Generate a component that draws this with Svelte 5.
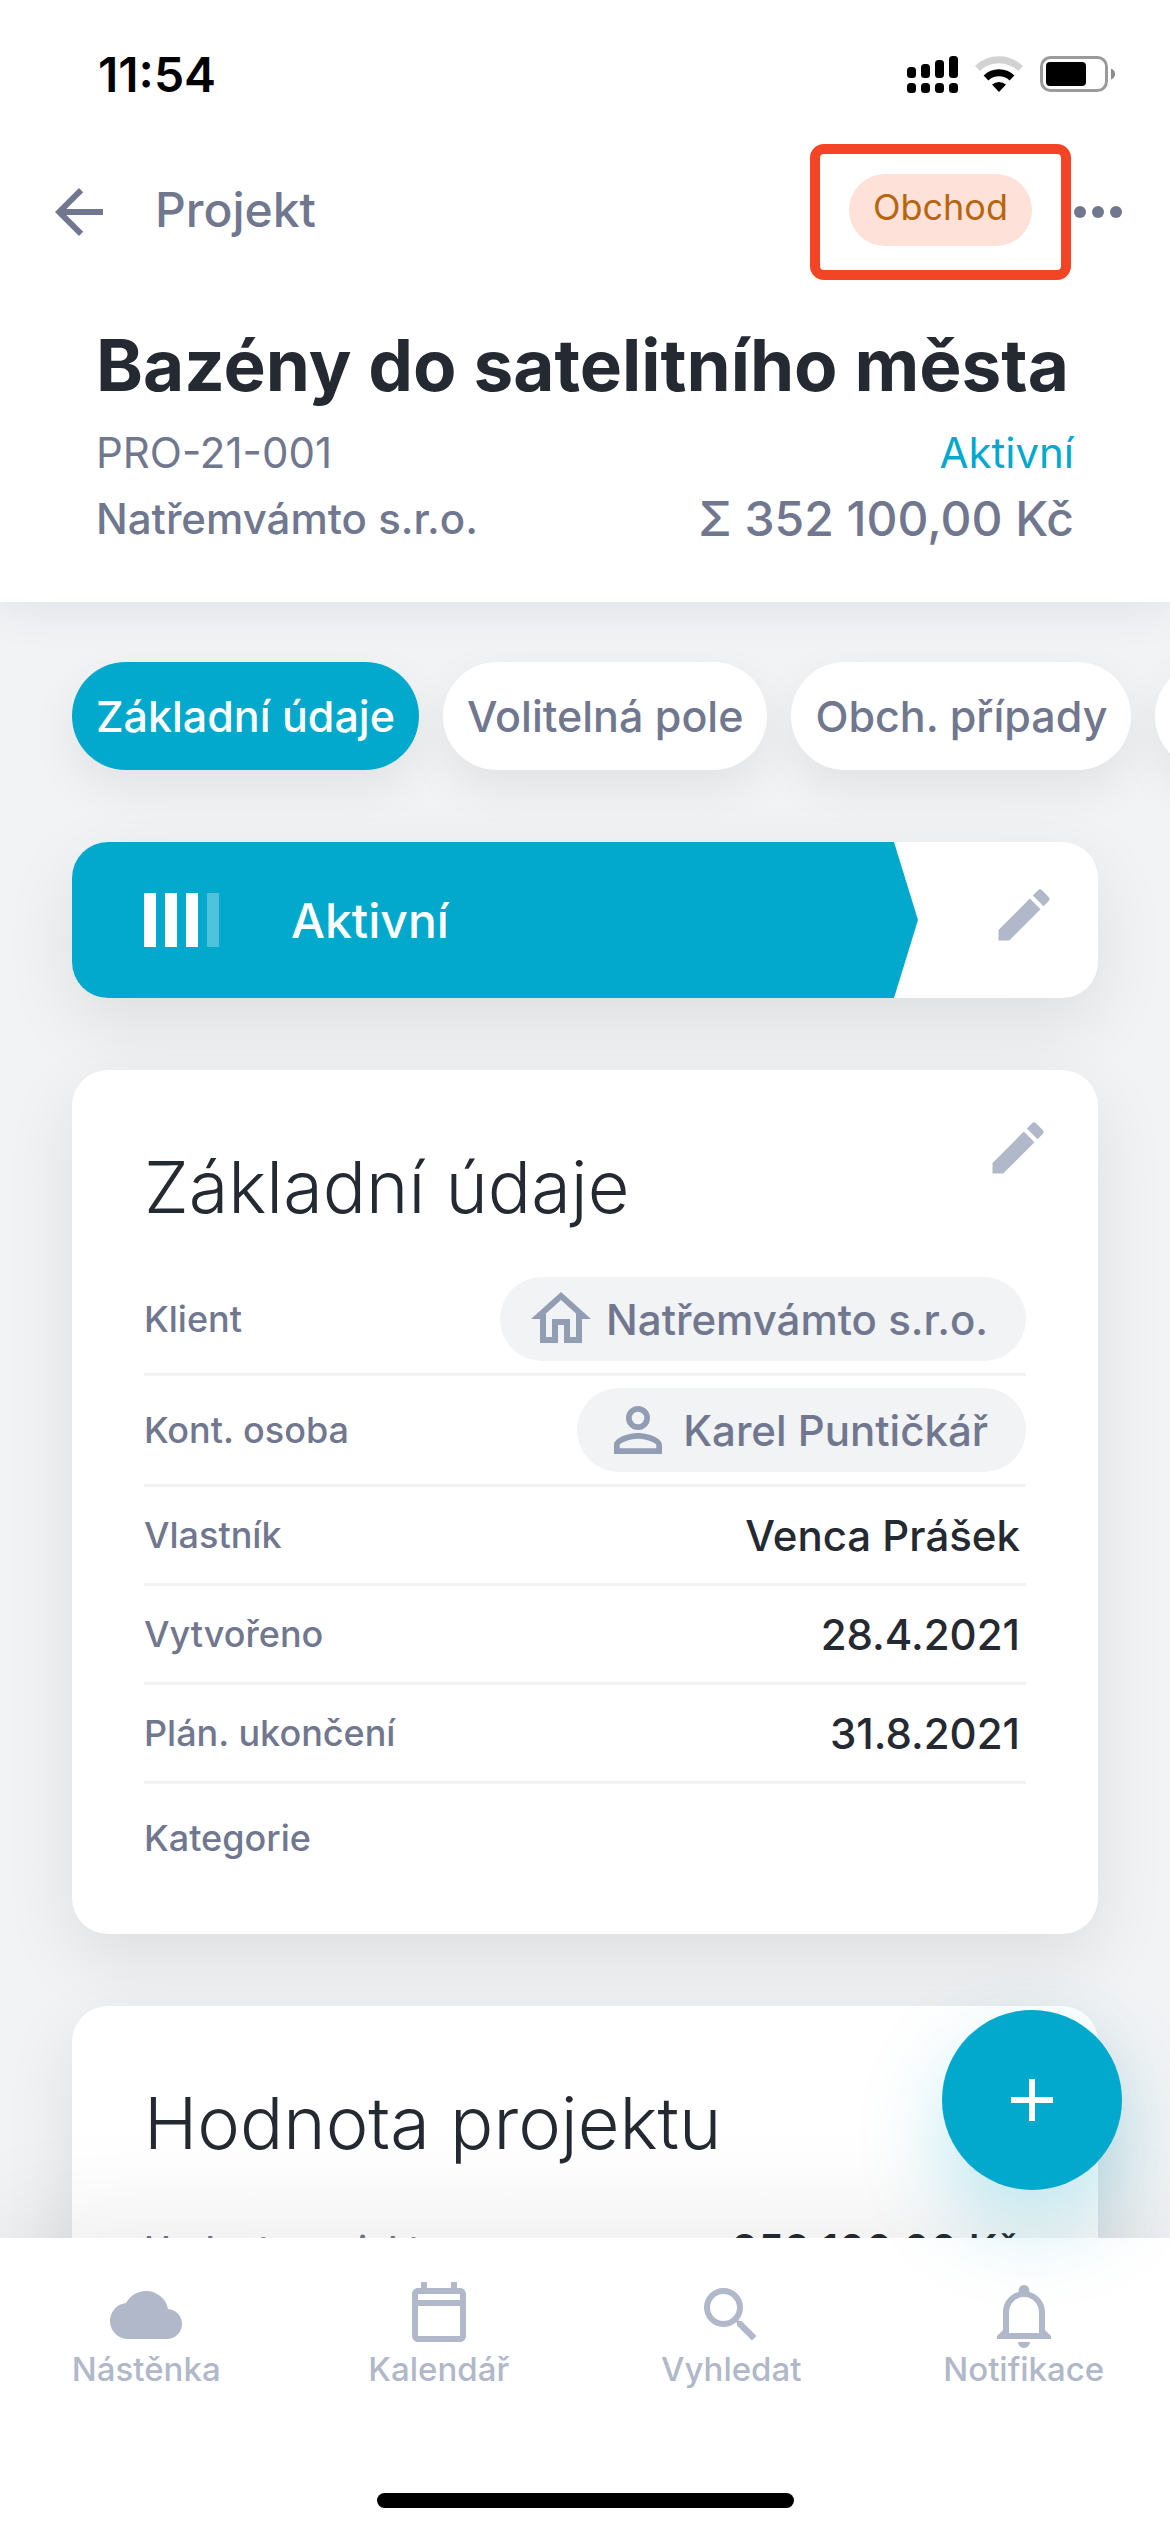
<script lang="ts">
  type Row = { label: string; value?: string; icon?: 'home' | 'person'; tall?: boolean };

  const tabs = ['Základní údaje', 'Volitelná pole', 'Obch. případy', 'Události'];
  let activeTab = $state(tabs[0]);

  const basics: Row[] = [
    { label: 'Klient', value: 'Natřemvámto s.r.o.', icon: 'home' },
    { label: 'Kont. osoba', value: 'Karel Puntičkář', icon: 'person' },
    { label: 'Vlastník', value: 'Venca Prášek' },
    { label: 'Vytvořeno', value: '28.4.2021' },
    { label: 'Plán. ukončení', value: '31.8.2021' },
    { label: 'Kategorie', tall: true },
  ];

  const worth: Row[] = [{ label: 'Hodnota projektu', value: '352 100,00 Kč' }];

  // 24-unit icon outlines
  const icons = {
    pencil: 'M3 17.25V21h3.75L17.81 9.94l-3.75-3.75L3 17.25zM20.71 7.04a1 1 0 0 0 0-1.41l-2.34-2.34a1 1 0 0 0-1.41 0l-1.83 1.83 3.75 3.75 1.83-1.83z',
    home: 'M12 5.69l5 4.5V18h-2v-6H9v6H7v-7.81l5-4.5M12 3L2 12h3v8h6v-6h2v6h6v-8h3L12 3z',
    person: 'M12 5.9a2.1 2.1 0 1 1 0 4.2 2.1 2.1 0 0 1 0-4.2m0 9c2.97 0 6.1 1.46 6.1 2.1v1.1H5.9V17c0-.64 3.13-2.1 6.1-2.1M12 4a4 4 0 1 0 0 8 4 4 0 0 0 0-8zm0 9c-2.67 0-8 1.34-8 4v3h16v-3c0-2.66-5.33-4-8-4z',
  };

  const nav = [
    { label: 'Nástěnka', path: 'M19.35 10.04A7.49 7.49 0 0 0 12 4C9.11 4 6.6 5.64 5.35 8.04A5.994 5.994 0 0 0 0 14c0 3.31 2.69 6 6 6h13c2.76 0 5-2.24 5-5 0-2.64-2.05-4.78-4.65-4.96z' },
    { label: 'Kalendář', path: 'M19 3h-1V1h-2v2H8V1H6v2H5c-1.1 0-2 .9-2 2v14c0 1.1.9 2 2 2h14c1.1 0 2-.9 2-2V5c0-1.1-.9-2-2-2zm0 16H5V9h14v10zm0-12H5V5h14v2z' },
    { label: 'Vyhledat', path: 'M15.5 14h-.79l-.28-.27A6.471 6.471 0 0 0 16 9.5 6.5 6.5 0 1 0 9.5 16c1.61 0 3.09-.59 4.23-1.57l.27.28v.79l5 4.99L20.49 19l-4.99-5zm-6 0C7.01 14 5 11.99 5 9.5S7.01 5 9.5 5 14 7.01 14 9.5 11.99 14 9.5 14z' },
    { label: 'Notifikace', path: 'M10 21h4a2 2 0 0 1-4 0zM12 2a1.8 1.8 0 0 0-1.8 1.8v.5C7.2 5.1 5 7.8 5 11v6l-2 2v1h18v-1l-2-2v-6c0-3.2-2.2-5.9-5.2-6.7v-.5A1.8 1.8 0 0 0 12 2zm5 16H7v-7a5 5 0 0 1 10 0v7z' },
  ];
</script>

{#snippet rows(items: Row[])}
  <dl>
    {#each items as row}
      <div class="row" class:tall={row.tall || row.icon}>
        <dt>{row.label}</dt>
        <dd>
          {#if row.icon}
            <a class="link-pill" href="#{row.icon}">
              <svg viewBox="0 0 24 24" aria-hidden="true"><path d={icons[row.icon]} /></svg>
              {row.value}
            </a>
          {:else if row.value}
            <span class="value">{row.value}</span>
          {/if}
        </dd>
      </div>
    {/each}
  </dl>
{/snippet}

{#snippet edit(label: string)}
  <button class="edit" type="button" aria-label={label}>
    <svg viewBox="0 0 24 24" aria-hidden="true"><path d={icons.pencil} /></svg>
  </button>
{/snippet}

<div class="screen">
  <header>
    <div class="status-bar">
      <time>11:54</time>
      <div class="system">
        <svg width="51" height="37" viewBox="0 0 51 37" aria-hidden="true">
          <rect x="0" y="11" width="9" height="11" rx="3.5" />
          <rect x="14" y="8" width="9" height="14" rx="3.5" />
          <rect x="28" y="4" width="9" height="18" rx="3.5" />
          <rect x="42" y="0" width="9" height="22" rx="3.5" />
          <rect x="0" y="27" width="9" height="10" rx="3.5" />
          <rect x="14" y="27" width="9" height="10" rx="3.5" />
          <rect x="28" y="27" width="9" height="10" rx="3.5" />
          <rect x="42" y="27" width="9" height="10" rx="3.5" />
        </svg>
        <svg width="48" height="36" viewBox="0 0 48 36" aria-hidden="true">
          <path d="M2.5 12.5a31 31 0 0 1 43 0" fill="none" stroke="#d2d2d2" stroke-width="7" />
          <path d="M11 22a19 19 0 0 1 26 0" fill="none" stroke="#000" stroke-width="7" />
          <path d="M24 36l-7-7.5a11 11 0 0 1 14 0z" />
        </svg>
        <svg width="75" height="36" viewBox="0 0 75 36" aria-hidden="true">
          <rect x="1.5" y="1.5" width="65" height="33" rx="9" fill="none" stroke="#9b9b9b" stroke-width="3" />
          <rect x="6" y="6" width="40" height="24" rx="4" />
          <path d="M71 12.5q4 1.5 4 5.500t-4 5.500z" fill="#8b8b8b" />
        </svg>
      </div>
    </div>

    <div class="toolbar">
      <button class="back" type="button" aria-label="Zpět">
        <svg viewBox="0 0 16 16" aria-hidden="true"><path d="M16 7H3.8l5.6-5.6L8 0 0 8l8 8 1.4-1.4L3.8 9H16z" /></svg>
      </button>
      <span class="kind">Projekt</span>
      <div class="marked"><span class="badge">Obchod</span></div>
      <button class="more" type="button" aria-label="Další akce">
        <svg viewBox="0 0 48 12" aria-hidden="true">
          <circle cx="6" cy="6" r="6" /><circle cx="24" cy="6" r="6" /><circle cx="42" cy="6" r="6" />
        </svg>
      </button>
    </div>

    <div class="summary">
      <h1>Bazény do satelitního města</h1>
      <p><span>PRO-21-001</span><span class="state">Aktivní</span></p>
      <p class="strong"><span>Natřemvámto s.r.o.</span><span class="total">Σ 352 100,00 Kč</span></p>
    </div>
  </header>

  <main>
    <div class="tabs">
      {#each tabs as tab}
        <button type="button" class:active={tab === activeTab} aria-pressed={tab === activeTab} onclick={() => (activeTab = tab)}>{tab}</button>
      {/each}
    </div>

    <section class="stage">
      <div class="stage-fill">
        <span class="bars" aria-hidden="true"><i></i><i></i><i></i><i></i></span>
        Aktivní
      </div>
      {@render edit('Změnit stav')}
    </section>

    <section class="card">
      <div class="card-head">
        <h2>Základní údaje</h2>
        {@render edit('Upravit základní údaje')}
      </div>
      {@render rows(basics)}
    </section>

    <section class="card">
      <div class="card-head"><h2>Hodnota projektu</h2></div>
      {@render rows(worth)}
    </section>
  </main>

  <footer>
    <button class="add" type="button" aria-label="Přidat">
      <svg viewBox="0 0 42 42" aria-hidden="true"><path d="M18 0h6v18h18v6H24v18h-6V24H0v-6h18z" /></svg>
    </button>
    <nav>
      {#each nav as item}
        <a href="#{item.label}">
          <svg viewBox="0 0 24 24" aria-hidden="true"><path d={item.path} /></svg>
          {item.label}
        </a>
      {/each}
    </nav>
    <div class="home-indicator"></div>
  </footer>
</div>

<style>
  :global(body) { margin: 0; background: #f1f3f5; }
  .screen {
    --teal: #02a9cc;
    --ink: #252932;
    --muted: #70778f;
    --faint: #b0b8c9;
    --shadow: 0 24px 72px rgba(0, 0, 0, .09);
    display: flex;
    flex-direction: column;
    height: 100vh;
    overflow: hidden;
    background: #f1f3f5;
    color: var(--ink);
    font-family: Inter, Roboto, sans-serif;
    font-size: 42px;
    font-weight: 500;
  }
  svg { display: block; flex: none; }
  button { border: 0; padding: 0; background: none; color: inherit; font: inherit; cursor: pointer; }
  a { color: inherit; text-decoration: none; }
  h1, h2, p, dl, dd { margin: 0; }

  header { position: relative; z-index: 1; flex: none; background: #fff; box-shadow: 0 0 48px rgba(30, 30, 90, .1); }
  .status-bar { display: flex; align-items: center; justify-content: space-between; height: 144px; padding: 4px 55px 0 98px; box-sizing: border-box; color: #000; }
  time { font-size: 48px; font-weight: 600; }
  .system { display: flex; gap: 17px; align-items: center; }

  .toolbar { display: flex; align-items: center; height: 136px; padding: 0 48px 0 55px; color: var(--muted); }
  .back svg { width: 48px; height: 48px; fill: currentColor; }
  .kind { flex: 1; margin-left: 52px; font-size: 48px; line-height: 60px; padding-bottom: 4px; }
  .marked { border: 10px solid #f34525; border-radius: 14px; padding: 20px 29px 24px; }
  .badge { display: block; box-sizing: border-box; height: 72px; border-radius: 36px; background: #fee1d8; color: #b8650f; font-size: 36px; font-weight: 400; line-height: 66px; padding: 0 24px; }
  .more { margin-left: 3px; }
  .more svg { width: 48px; height: 12px; fill: currentColor; }

  .summary { padding: 43px 96px 51px; color: var(--muted); }
  h1 { color: var(--ink); font-size: 71px; font-weight: 700; line-height: 84px; margin-bottom: 12px; }
  p { display: flex; align-items: center; justify-content: space-between; height: 66px; font-weight: 400; }
  .state { color: var(--teal); }
  .strong { font-weight: 500; }
  .total { font-size: 48px; }

  main { flex: 1; min-height: 0; display: flex; flex-direction: column; gap: 72px; padding: 60px 72px 0; overflow: hidden; }
  .tabs { display: flex; flex: none; gap: 24px; margin-right: -72px; }
  .tabs button { flex: none; height: 108px; border-radius: 54px; padding: 0 24px; background: #fff; box-shadow: 0 18px 48px rgba(0, 0, 0, .07); color: var(--muted); font-size: 43px; }
  .tabs .active { background: var(--teal); color: #fff; }

  .stage { display: flex; flex: none; align-items: stretch; height: 156px; border-radius: 36px; background: #fff; box-shadow: var(--shadow); }
  .stage-fill { display: flex; flex: 1; gap: 72px; align-items: center; padding-left: 72px; border-radius: 36px 0 0 36px; background: var(--teal); clip-path: polygon(0 0, calc(100% - 24px) 0, 100% 50%, calc(100% - 24px) 100%, 0 100%); color: #fff; font-size: 48px; }
  .bars { display: flex; gap: 9px; }
  .bars i { width: 12px; height: 54px; background: #fff; }
  .bars i:last-child { opacity: .3; }
  .edit svg { width: 68px; height: 68px; fill: var(--faint); }
  .stage .edit { width: 180px; padding: 0 0 10px 72px; }

  .card { flex: none; border-radius: 36px; background: #fff; box-shadow: var(--shadow); padding: 0 72px 42px; }
  .card-head { display: flex; justify-content: space-between; height: 195px; }
  h2 { padding-top: 72px; font-size: 72px; font-weight: 300; line-height: 90px; }
  .card-head .edit { align-self: flex-start; margin: 44px -26px 0 0; }
  .row { display: flex; align-items: center; justify-content: space-between; height: 96px; border-bottom: 3px solid #f1f2f4; }
  .row:last-child { border-bottom: 0; }
  .tall { height: 108px; }
  dt { color: var(--muted); font-size: 36px; }
  .value { padding-right: 6px; }
  .link-pill { display: flex; gap: 9px; align-items: center; height: 84px; border-radius: 42px; background: #f1f3f5; color: var(--muted); padding: 0 38px 0 25px; }
  .link-pill svg { width: 72px; height: 72px; fill: #929db3; }

  footer { position: relative; z-index: 1; flex: none; background: #fff; box-shadow: 0 0 120px rgba(0, 0, 0, .1); }
  .add { position: absolute; right: 48px; top: -228px; display: grid; place-items: center; width: 180px; height: 180px; border-radius: 50%; background: var(--teal); box-shadow: 0 36px 84px rgba(2, 169, 204, .25); }
  .add svg { width: 42px; height: 42px; fill: #fff; }
  nav { display: flex; padding-top: 41px; }
  nav a { display: flex; flex: 1; flex-direction: column; align-items: center; color: var(--faint); font-size: 33px; line-height: 36px; }
  nav svg { width: 72px; height: 72px; fill: currentColor; }
  .home-indicator { width: 417px; height: 15px; border-radius: 8px; background: #000; margin: 106px auto 24px; }
</style>
